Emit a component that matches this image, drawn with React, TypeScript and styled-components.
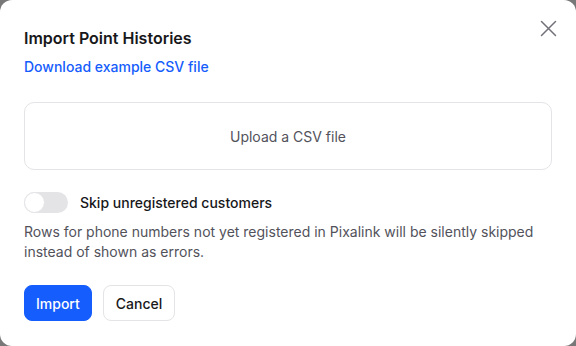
import React, { useState } from "react";
import styled, { createGlobalStyle } from "styled-components";

const Global = createGlobalStyle`
  html, body { margin: 0; padding: 0; background: #787878; }
  body { font-family: Inter, "Noto Sans", sans-serif; -webkit-font-smoothing: antialiased; }
  * { box-sizing: border-box; }
`;

const Dialog = styled.div`
  position: relative;
  width: 576px;
  height: 346px;
  background: #ffffff;
  border-radius: 12px;
  padding: 26px 24px 24px;
  display: flex;
  flex-direction: column;
`;

const Title = styled.h2`
  margin: 0;
  font-size: 16px;
  line-height: 24px;
  font-weight: 600;
  color: #18181b;
`;

const Link = styled.a`
  margin-top: 7px;
  font-size: 14px;
  line-height: 20px;
  font-weight: 500;
  color: #155dfc;
  text-decoration: none;
  align-self: flex-start;
  cursor: pointer;
`;

const CloseButton = styled.button`
  position: absolute;
  top: 18px;
  right: 18px;
  width: 20px;
  height: 20px;
  padding: 0;
  border: none;
  background: transparent;
  display: flex;
  align-items: center;
  justify-content: center;
  color: #71717a;
  cursor: pointer;
`;

const Dropzone = styled.div`
  margin-top: 25px;
  height: 68px;
  border: 1px solid #e4e4e7;
  border-radius: 10px;
  display: flex;
  align-items: center;
  justify-content: center;
  font-size: 14px;
  color: #52525b;
`;

const ToggleRow = styled.label`
  margin-top: 22px;
  display: flex;
  align-items: center;
  gap: 12px;
  font-size: 14px;
  line-height: 20px;
  font-weight: 500;
  color: #18181b;
  cursor: pointer;
`;

const Track = styled.span<{ $on: boolean }>`
  position: relative;
  width: 44px;
  height: 21px;
  border-radius: 999px;
  background: ${(p) => (p.$on ? "#155dfc" : "#e4e4e7")};
  flex-shrink: 0;
`;

const Knob = styled.span<{ $on: boolean }>`
  position: absolute;
  top: 0;
  left: ${(p) => (p.$on ? "23px" : "0")};
  width: 21px;
  height: 21px;
  border-radius: 50%;
  background: #ffffff;
  border: 1px solid #e4e4e7;
`;

const Description = styled.p`
  margin: 9px 0 0;
  font-size: 14px;
  line-height: 20px;
  color: #52525b;
`;

const Actions = styled.div`
  margin-top: 23px;
  display: flex;
  gap: 11px;
`;

const Button = styled.button<{ $primary?: boolean }>`
  height: 36px;
  padding: 0 ${(p) => (p.$primary ? "11px" : "12px")};
  border-radius: 8px;
  font-family: inherit;
  font-size: 14px;
  font-weight: 500;
  cursor: pointer;
  border: 1px solid ${(p) => (p.$primary ? "#155dfc" : "#e4e4e7")};
  background: ${(p) => (p.$primary ? "#155dfc" : "#ffffff")};
  color: ${(p) => (p.$primary ? "#ffffff" : "#18181b")};
`;

export default function App() {
  const [on, setOn] = useState(false);
  return (
    <>
      <Global />
      <Dialog>
        <Title>Import Point Histories</Title>
        <Link>Download example CSV file</Link>
        <CloseButton aria-label="Close">
          <svg width="17" height="17" viewBox="0 0 17 17" fill="none" stroke="currentColor" strokeWidth="1.5" strokeLinecap="round">
            <path d="M1.5 1.5L15.5 15.5M15.5 1.5L1.5 15.5" />
          </svg>
        </CloseButton>
        <Dropzone>Upload a CSV file</Dropzone>
        <ToggleRow onClick={() => setOn(!on)}>
          <Track $on={on}>
            <Knob $on={on} />
          </Track>
          Skip unregistered customers
        </ToggleRow>
        <Description>
          Rows for phone numbers not yet registered in Pixalink will be silently skipped instead of shown as errors.
        </Description>
        <Actions>
          <Button $primary>Import</Button>
          <Button>Cancel</Button>
        </Actions>
      </Dialog>
    </>
  );
}
